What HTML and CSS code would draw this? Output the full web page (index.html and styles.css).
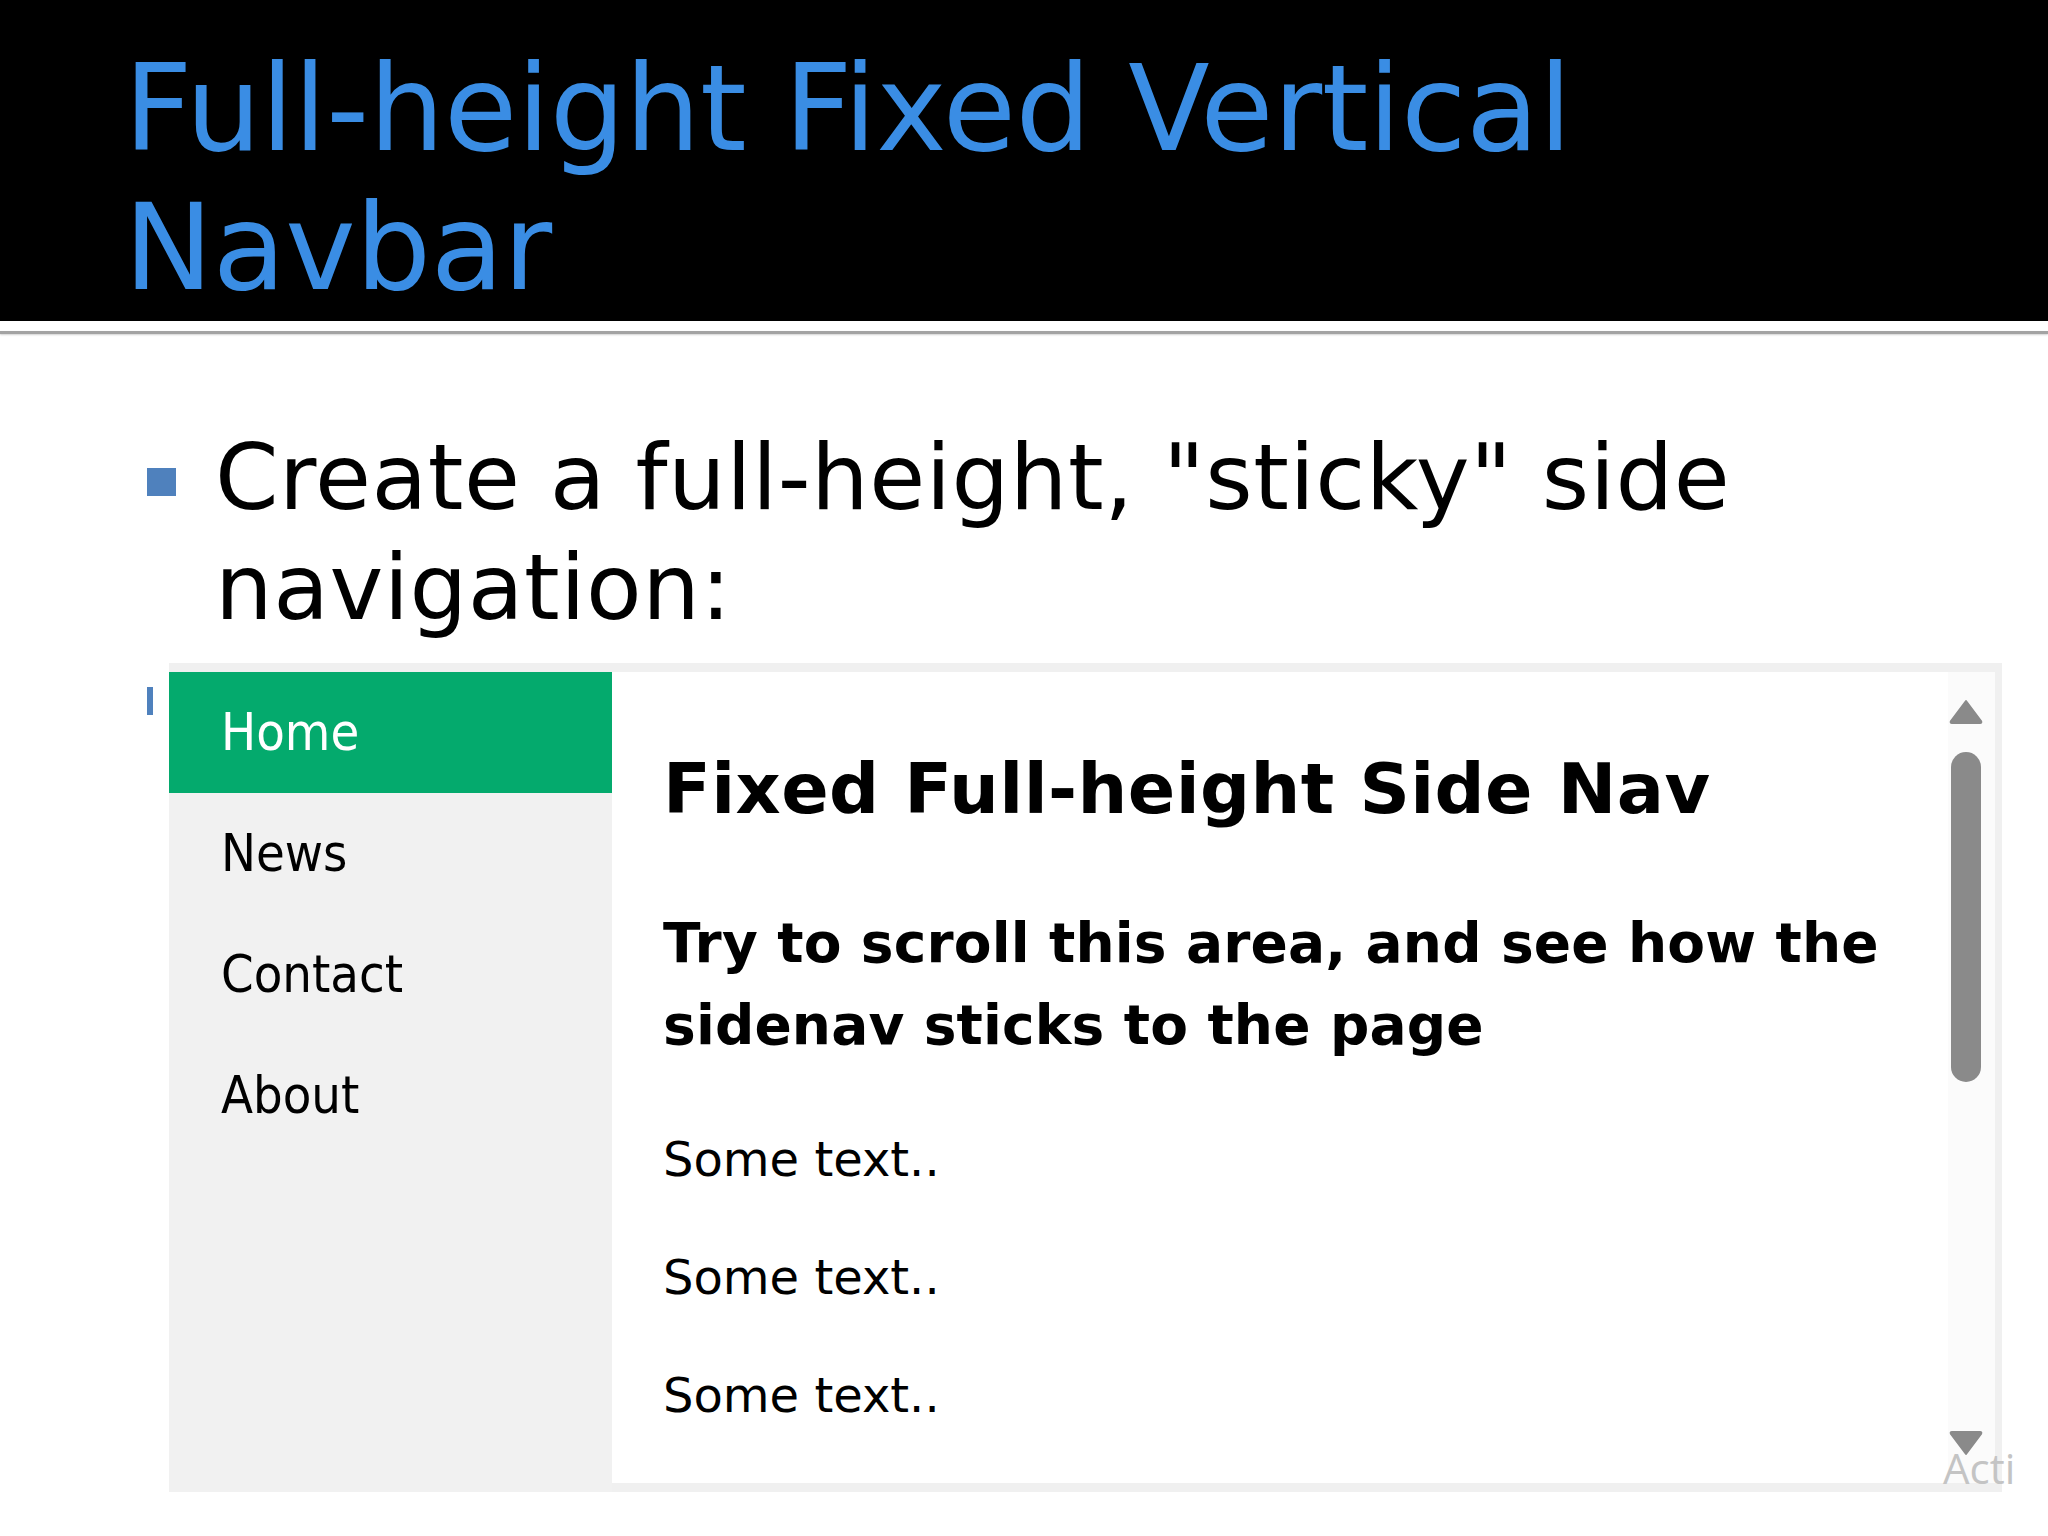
FILE: index.html
```html
<!DOCTYPE html>
<html lang="en">
<head>
<meta charset="utf-8">
<title>Full-height Fixed Vertical Navbar</title>
<link rel="stylesheet" href="styles.css">
</head>
<body>
<header class="slide-header">
  <h1 class="slide-title">Full-height Fixed Vertical<br>Navbar</h1>
</header>
<div class="rule"></div>
<main class="slide-body">
  <div class="bullet-row">
    <span class="bullet"></span>
    <p class="bullet-text">Create a full-height, "sticky" side navigation:</p>
  </div>
  <div class="demo-row">
    <span class="bullet-stub"></span>
    <div class="frame">
      <nav class="sidenav">
        <a class="nav-link active" href="#">Home</a>
        <a class="nav-link" href="#">News</a>
        <a class="nav-link" href="#">Contact</a>
        <a class="nav-link" href="#">About</a>
      </nav>
      <section class="page">
        <div class="page-content">
          <h2 class="page-title">Fixed Full-height Side Nav</h2>
          <h3 class="page-sub">Try to scroll this area, and see how the sidenav sticks to the page</h3>
          <p class="page-text">Some text..</p>
          <p class="page-text">Some text..</p>
          <p class="page-text">Some text..</p>
        </div>
        <div class="scrollbar">
          <svg class="arrow" width="34" height="26" viewBox="0 0 34 26"><path d="M17 2 L32 22 Q33 24 31 24 L3 24 Q1 24 2 22 Z" fill="#8a8a8a" stroke="#8a8a8a" stroke-width="2" stroke-linejoin="round"/></svg>
          <div class="track"><div class="thumb"></div></div>
          <svg class="arrow" width="34" height="26" viewBox="0 0 34 26"><path d="M17 24 L32 4 Q33 2 31 2 L3 2 Q1 2 2 4 Z" fill="#8a8a8a" stroke="#8a8a8a" stroke-width="2" stroke-linejoin="round"/></svg>
        </div>
      </section>
    </div>
  </div>
</main>
<div class="watermark">Acti</div>
</body>
</html>
```

FILE: styles.css
```css
html, body {
  margin: 0;
  padding: 0;
  background: #ffffff;
}
body {
  width: 2048px;
  height: 1536px;
  overflow: hidden;
  position: relative;
  font-family: "DejaVu Sans", Verdana, sans-serif;
}
.slide-header {
  background: #000000;
  height: 321px;
  box-sizing: border-box;
  padding: 40px 0 0 124px;
}
.slide-title {
  margin: 0;
  font-weight: normal;
  font-size: 119px;
  line-height: 139px;
  letter-spacing: -0.3px;
  color: #3a8de4;
  white-space: nowrap;
}
.rule {
  margin-top: 10px;
  height: 3px;
  background: #a3a3a3;
  box-shadow: 0 1px 2px rgba(0,0,0,0.18);
}
.slide-body {
  padding-top: 89px;
}
.bullet-row {
  display: flex;
  align-items: flex-start;
  padding-left: 147px;
}
.bullet {
  flex: none;
  width: 29px;
  height: 28px;
  margin-top: 45px;
  background: #4f81bd;
}
.bullet-text {
  margin: 0 0 0 39px;
  width: 1700px;
  font-size: 91px;
  line-height: 110px;
  letter-spacing: 0.5px;
  color: #000;
}
.demo-row {
  display: flex;
  align-items: flex-start;
  margin-top: 20px;
  padding-left: 147px;
}
.bullet-stub {
  flex: none;
  width: 6px;
  height: 28px;
  margin-top: 24px;
  margin-right: 16px;
  background: #4f81bd;
}
.frame {
  display: flex;
  width: 1833px;
  height: 829px;
  box-sizing: border-box;
  padding: 9px 7px 0 0;
  background: #f0f0f0;
}
.sidenav {
  flex: none;
  width: 443px;
  height: 820px;
  background: #f1f1f1;
  display: flex;
  flex-direction: column;
}
.nav-link {
  display: block;
  height: 121px;
  box-sizing: border-box;
  padding: 30px 0 0 52px;
  font-family: "DejaVu Sans Condensed", "DejaVu Sans", sans-serif;
  font-stretch: condensed;
  font-size: 52px;
  line-height: 61px;
  color: #000;
  text-decoration: none;
}
.nav-link.active {
  background: #04aa6d;
  color: #ffffff;
}
.page {
  flex: 1;
  display: flex;
  height: 811px;
  background: #ffffff;
}
.page-content {
  flex: 1;
  padding: 0 27px 0 51px;
}
.page-title {
  margin: 75px 0 0 0;
  font-size: 70px;
  line-height: 84px;
  letter-spacing: 0.4px;
  font-weight: bold;
  color: #000;
  white-space: nowrap;
}
.page-sub {
  margin: 71px 0 0 0;
  font-size: 55px;
  line-height: 82px;
  letter-spacing: 0.15px;
  font-weight: bold;
  color: #000;
}
.page-text {
  margin: 60px 0 0 0;
  font-size: 48px;
  line-height: 58px;
  color: #000;
}
.page-sub + .page-text {
  margin-top: 64px;
}
.scrollbar {
  flex: none;
  width: 47px;
  background: #fbfbfb;
  display: flex;
  flex-direction: column;
  align-items: center;
  padding: 27px 11px 0 0;
  box-sizing: border-box;
}
.arrow {
  display: block;
  flex: none;
}
.track {
  height: 705px;
  width: 30px;
  padding-top: 27px;
  box-sizing: border-box;
}
.thumb {
  width: 30px;
  height: 330px;
  border-radius: 15px;
  background: #8a8a8a;
}
.watermark {
  position: absolute;
  left: 1943px;
  top: 1444px;
  font-family: "Open Sans", "Noto Sans", sans-serif;
  font-size: 42px;
  line-height: 48px;
  color: #c4c4c4;
}
```
